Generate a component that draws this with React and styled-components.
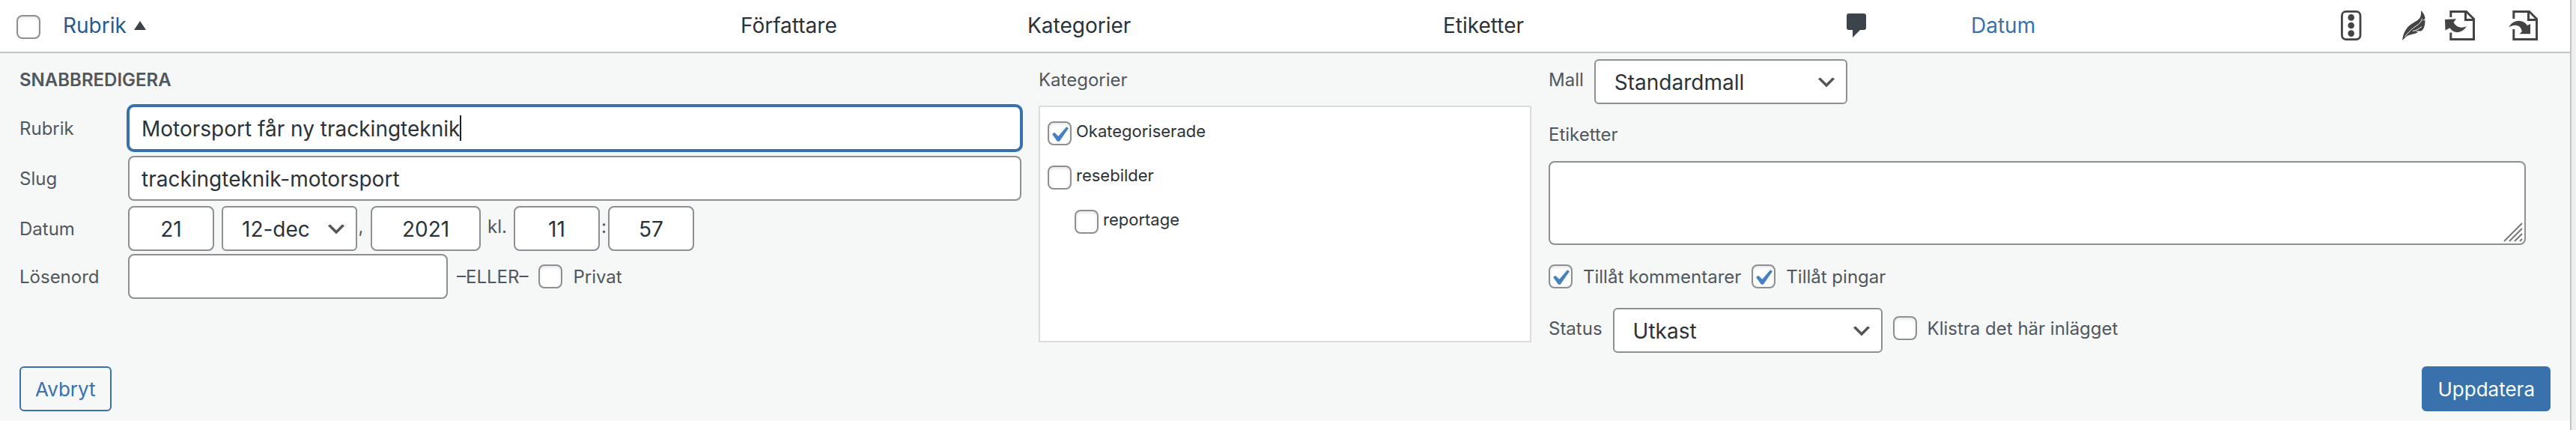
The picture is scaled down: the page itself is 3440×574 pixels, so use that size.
import React, { useLayoutEffect, useRef, useState } from 'react';
import styled, { createGlobalStyle, css } from 'styled-components';

const arrowDown =
  "url(\"data:image/svg+xml,%3Csvg xmlns='http://www.w3.org/2000/svg' viewBox='0 0 20 20'%3E%3Cpath d='M5 6l5 5 5-5 2 1-7 7-7-7 2-1z' fill='%23555'/%3E%3C/svg%3E\")";
const checkMark =
  "url(\"data:image/svg+xml,%3Csvg xmlns='http://www.w3.org/2000/svg' viewBox='0 0 20 20'%3E%3Cpath d='M14.83 4.89l1.34.94-5.81 8.38H9.02L5.78 9.67l1.34-1.25 2.57 2.4z' fill='%234682c2'/%3E%3C/svg%3E\")";

const CommentIcon = () => (
  <svg width="27" height="32" viewBox="0 0 27 32" fill="#3c434a" role="img" aria-label="Kommentarer">
    <path d="M3 0h20a3 3 0 0 1 3 3v16a3 3 0 0 1-3 3h-5l-10 10V22H3a3 3 0 0 1-3-3V3a3 3 0 0 1 3-3z" />
  </svg>
);

const ScoreIcon = () => (
  <svg width="28" height="40" viewBox="0 0 28 40" fill="#444" role="img" aria-label="SEO-poäng">
    <rect x="1.4" y="1.4" width="24.6" height="37.2" rx="5.5" fill="none" stroke="#444" strokeWidth="2.8" />
    <circle cx="13.7" cy="9.4" r="4.3" />
    <circle cx="13.7" cy="20" r="4.3" />
    <circle cx="13.7" cy="30.6" r="4.3" />
  </svg>
);

const FeatherIcon = () => (
  <svg width="31" height="40" viewBox="0 0 31 40" role="img" aria-label="Läsbarhet">
    <path
      d="M25 0c4 4 6 8.500 5.300 11.600l-3.600 1.700 3.700-.4c.2 7.100-1.400 11.100-4.400 14.100-3 .9-5.500.3-8.500.5l3.500 1.500c-5 3-10.500 2.500-15 5.500-2.500 1.700-4 3.500-6 5.500.5-6 2.500-12 7-17.500 4.500-5 13-8 16.500-12.500 1.500-3 1.800-6 1.500-10z"
      fill="#444"
    />
    <path d="M26.500 11c-2 7-7 8.500-12 12.500-4 3-7 6.500-11 11.500M14 27.500c4-.5 8.500-3 12-6" fill="none" stroke="#fff" strokeWidth="1" />
  </svg>
);

const LinksOutIcon = () => (
  <svg width="41" height="40" viewBox="0 0 41 40" fill="#444" role="img" aria-label="Utgående länkar">
    <path d="M7.800 9V1.500h20.800l9.900 9.800v27.200H7.800V29.500" fill="none" stroke="#444" strokeWidth="3" />
    <path d="M26 1h3v10h10v3H26z" />
    <path d="M0 12l15-.8-3.500 4.800c4 6.500 10 8.500 17.500 5-3.500 5.500-8 8.200-13.500 8-3.500-.3-6.500-2.200-9-5.800L.5 26.500z" />
  </svg>
);

const LinksInIcon = () => (
  <svg width="41" height="40" viewBox="0 0 41 40" fill="#444" role="img" aria-label="Inkommande länkar">
    <path d="M6.800 11V1.500h20.800l9.900 9.800v27.200H6.800V25" fill="none" stroke="#444" strokeWidth="3" />
    <path d="M25 1h3v10h10v3H25z" />
    <path d="M0 22.500C7 11 19 11.500 25 20l4-2v13.300H14.500l3.300-3.100C16.500 19.500 9 17.500 0 22.500z" />
  </svg>
);

const TitleField = () => {
  const inputRef = useRef(null);
  const [title, setTitle] = useState('Motorsport får ny trackingteknik');
  const [caretLeft, setCaretLeft] = useState(0);

  useLayoutEffect(() => {
    const style = getComputedStyle(inputRef.current);
    const ctx = document.createElement('canvas').getContext('2d');
    ctx.font = `${style.fontWeight} ${style.fontSize} ${style.fontFamily}`;
    setCaretLeft(Math.round(ctx.measureText(title).width) + parseInt(style.paddingLeft, 10) + 2);
  }, [title]);

  return (
    <InputWrapper>
      <TextInput
        id="post-title"
        ref={inputRef}
        type="text"
        value={title}
        onChange={(e) => setTitle(e.target.value)}
        $active
        autoFocus
      />
      <Caret style={{ left: caretLeft }} />
    </InputWrapper>
  );
};

const CategoryItem = ({ name, checked, nested }) => (
  <CategoryRow $nested={nested}>
    <Checkbox type="checkbox" defaultChecked={checked} />
    <span>{name}</span>
  </CategoryRow>
);

const QuickEdit = () => (
  <EditForm onSubmit={(e) => e.preventDefault()}>
    <Columns>
      <Column>
        <Heading>SNABBREDIGERA</Heading>
        <Field>
          <FieldLabel htmlFor="post-title">Rubrik</FieldLabel>
          <TitleField />
        </Field>
        <Field>
          <FieldLabel htmlFor="post-slug">Slug</FieldLabel>
          <TextInput id="post-slug" type="text" defaultValue="trackingteknik-motorsport" />
        </Field>
        <Field $tight>
          <FieldLabel htmlFor="post-day">Datum</FieldLabel>
          <DateInput id="post-day" type="text" defaultValue="21" />
          <MonthSelect aria-label="Månad" defaultValue="12">
            <option value="12">12-dec</option>
          </MonthSelect>
          <Separator $width="10px" $gap="8px">,</Separator>
          <DateInput $width="147px" type="text" aria-label="År" defaultValue="2021" />
          <Separator $width="44px">kl.</Separator>
          <DateInput type="text" aria-label="Timme" defaultValue="11" />
          <Separator $width="11px">:</Separator>
          <DateInput type="text" aria-label="Minut" defaultValue="57" />
        </Field>
        <Field>
          <FieldLabel htmlFor="post-password">Lösenord</FieldLabel>
          <PasswordInput id="post-password" type="text" />
          <OrText>–ELLER–</OrText>
          <CheckLabel>
            <Checkbox type="checkbox" />
            <span>Privat</span>
          </CheckLabel>
        </Field>
      </Column>

      <Column>
        <ColumnTitle id="category-title">Kategorier</ColumnTitle>
        <CategoryList role="group" aria-labelledby="category-title">
          <CategoryItem name="Okategoriserade" checked />
          <CategoryItem name="resebilder" />
          <CategoryItem name="reportage" nested />
        </CategoryList>
      </Column>

      <Column>
        <SelectRow $first>
          <SelectLabel htmlFor="post-template">Mall</SelectLabel>
          <Select id="post-template" $width="338px">
            <option>Standardmall</option>
          </Select>
        </SelectRow>
        <TagsLabel htmlFor="post-tags">Etiketter</TagsLabel>
        <TagsWrapper>
          <TagsInput id="post-tags" />
          <Grip width="26" height="26" viewBox="0 0 26 26" aria-hidden="true">
            <path d="M1 25L25 1M8 25L25 8M15 25L25 15M22 25L25 22" stroke="#777" strokeWidth="2" />
          </Grip>
        </TagsWrapper>
        <CheckRow>
          <CheckLabel>
            <Checkbox type="checkbox" defaultChecked />
            <span>Tillåt kommentarer</span>
          </CheckLabel>
          <CheckLabel>
            <Checkbox type="checkbox" defaultChecked />
            <span>Tillåt pingar</span>
          </CheckLabel>
        </CheckRow>
        <SelectRow>
          <SelectLabel htmlFor="post-status">Status</SelectLabel>
          <Select id="post-status" $width="360px">
            <option>Utkast</option>
          </Select>
          <StickyLabel>
            <Checkbox type="checkbox" />
            <span>Klistra det här inlägget</span>
          </StickyLabel>
        </SelectRow>
      </Column>
    </Columns>
    <Actions>
      <Button type="button">Avbryt</Button>
      <Button type="submit" $primary>
        Uppdatera
      </Button>
    </Actions>
  </EditForm>
);

const App = () => (
  <>
    <GlobalStyle />
    <Page>
      <PostTable>
        <thead>
          <tr>
            <CheckCell $width="69px">
              <Checkbox type="checkbox" aria-label="Välj alla" />
            </CheckCell>
            <HeadCell>
              <SortLink href="#rubrik" $current>
                Rubrik
                <svg width="16" height="12" viewBox="0 0 16 12" fill="#3c434a" aria-hidden="true">
                  <path d="M8 0l8 12H0z" />
                </svg>
              </SortLink>
            </HeadCell>
            <HeadCell $width="383px">Författare</HeadCell>
            <HeadCell $width="555px">Kategorier</HeadCell>
            <HeadCell $width="539px">Etiketter</HeadCell>
            <HeadCell $width="166px">
              <CommentIcon />
            </HeadCell>
            <HeadCell $width="494px">
              <SortLink href="#datum">Datum</SortLink>
            </HeadCell>
            <HeadCell $width="82px">
              <ScoreIcon />
            </HeadCell>
            <HeadCell $width="57px">
              <FeatherIcon />
            </HeadCell>
            <HeadCell $width="85px">
              <LinksOutIcon />
            </HeadCell>
            <HeadCell $width="97px">
              <LinksInIcon />
            </HeadCell>
          </tr>
        </thead>
        <tbody>
          <tr>
            <EditCell colSpan={11}>
              <QuickEdit />
            </EditCell>
          </tr>
        </tbody>
      </PostTable>
    </Page>
  </>
);

const GlobalStyle = createGlobalStyle`
  *, *::before, *::after {
    box-sizing: border-box;
  }

  body {
    margin: 0;
    background: #f0f0f1;
    color: #2c3338;
    font: 400 24px Inter, "Liberation Sans", sans-serif;
  }
`;

const Page = styled.main`
  min-height: 100vh;
  margin-right: 6px;
  border-right: 2px solid #c3c4c7;
  background: #fff;
`;

const PostTable = styled.table`
  width: 100%;
  table-layout: fixed;
  border-collapse: separate;
  border-spacing: 0;
`;

const HeadCell = styled.th`
  width: ${({ $width }) => $width || 'auto'};
  height: 71px;
  padding: 0 0 2px 15px;
  border-bottom: 2px solid #c3c4c7;
  vertical-align: middle;
  text-align: left;
  font-size: 28px;
  font-weight: 400;
  line-height: 40px;

  svg {
    display: block;
  }
`;

const CheckCell = styled(HeadCell)`
  padding: 20px 0 0 22px;
  vertical-align: top;
`;

const SortLink = styled.a`
  display: inline-flex;
  align-items: center;
  gap: 10px;
  color: ${({ $current }) => ($current ? '#265a90' : '#3971ad')};
  text-decoration: none;
`;

const EditCell = styled.td`
  padding: 0;
  background: #f6f7f7;
`;

const EditForm = styled.form`
  padding: 0 26px 13px;
`;

const Columns = styled.div`
  display: grid;
  grid-template-columns: minmax(0, 61fr) minmax(0, 30fr) minmax(0, 61fr);
  column-gap: 23px;
  color: #50575e;
`;

const Column = styled.div`
  display: flex;
  flex-direction: column;
`;

const Heading = styled.h4`
  margin: 0;
  padding-top: 2px;
  font-size: 24px;
  font-weight: 600;
  line-height: 68px;
`;

const ColumnTitle = styled.span`
  padding-top: 2px;
  line-height: 68px;
`;

const Field = styled.div`
  display: flex;
  align-items: center;
  margin-bottom: ${({ $tight }) => ($tight ? '4px' : '7px')};
`;

const FieldLabel = styled.label`
  flex: 0 0 145px;
`;

const control = css`
  height: 60px;
  margin: 0;
  border: 2px solid #8c8f94;
  border-radius: 8px;
  background-color: #fff;
  color: #2c3338;
  font-family: inherit;
  font-size: 28px;
  outline: none;
`;

const TextInput = styled.input`
  ${control}
  flex: 1;
  width: 100%;
  min-width: 0;
  padding: 2px 16px 0;
  ${({ $active }) =>
    $active &&
    css`
      border-color: #3971ad;
      box-shadow: 0 0 0 2px #3971ad;
      caret-color: transparent;
    `}
`;

const InputWrapper = styled.div`
  position: relative;
  display: flex;
  flex: 1;
`;

const Caret = styled.span`
  position: absolute;
  top: 13px;
  width: 2px;
  height: 34px;
  background: #1d2327;
  pointer-events: none;
`;

const DateInput = styled.input`
  ${control}
  width: ${({ $width }) => $width || '115px'};
  padding: 2px 0 0;
  text-align: center;
`;

const PasswordInput = styled.input`
  ${control}
  width: 427px;
  padding: 2px 16px 0;
`;

const Select = styled.select`
  ${control}
  appearance: none;
  width: ${({ $width }) => $width};
  padding: 2px 48px 0 25px;
  border-radius: 6px;
  background: #fff ${arrowDown} no-repeat right 10px top 55%;
  background-size: 32px 32px;
`;

const MonthSelect = styled(Select)`
  width: 181px;
  margin-left: 10px;
`;

const Separator = styled.span`
  width: ${({ $width }) => $width};
  margin-right: ${({ $gap }) => $gap || '0'};
  line-height: 56px;
  align-self: flex-start;
  text-align: center;
`;

const OrText = styled.span`
  margin: 0 14px 0 12px;
`;

const Checkbox = styled.input`
  appearance: none;
  display: block;
  flex: none;
  width: 32px;
  height: 32px;
  margin: 0;
  border: 2px solid #8c8f94;
  border-radius: 8px;
  background-color: #fff;
  box-shadow: inset 0 2px 4px rgba(0, 0, 0, 0.1);

  &:checked {
    background-image: ${checkMark};
    background-position: -8px -5px;
    background-size: 42px 42px;
    background-repeat: no-repeat;
  }
`;

const CheckLabel = styled.label`
  display: flex;
  align-items: center;
  gap: 14px;
`;

const StickyLabel = styled(CheckLabel)`
  height: 54px;
  margin-left: 14px;
`;

const CategoryList = styled.div`
  height: 316px;
  padding: 19px 10px;
  border: 2px solid #dcdcde;
  background: #fff;
  overflow: auto;
`;

const CategoryRow = styled.label`
  display: flex;
  gap: 6px;
  margin: 0 0 27px ${({ $nested }) => ($nested ? '36px' : '0')};
  color: #2c3338;
  font-size: 22px;
  line-height: 26px;
`;

const SelectRow = styled.div`
  display: flex;
  align-items: flex-start;
  margin-top: ${({ $first }) => ($first ? '8px' : '26px')};
`;

const SelectLabel = styled.label`
  margin-right: 14px;
  line-height: 56px;
`;

const TagsLabel = styled.label`
  margin-top: 6px;
  line-height: 70px;
`;

const TagsWrapper = styled.div`
  position: relative;
  display: flex;
  margin-right: 33px;
`;

const TagsInput = styled.textarea`
  ${control}
  width: 100%;
  height: 112px;
  padding: 4px 16px;
  resize: none;
`;

const Grip = styled.svg`
  position: absolute;
  right: 4px;
  bottom: 4px;
  pointer-events: none;
`;

const CheckRow = styled.div`
  display: flex;
  gap: 14px;
  margin-top: 26px;
`;

const Actions = styled.div`
  display: flex;
  justify-content: space-between;
  margin-top: 18px;
`;

const Button = styled.button`
  height: 60px;
  padding: 0 19px;
  border: 2px solid #3971ad;
  border-radius: 6px;
  background: ${({ $primary }) => ($primary ? '#3971ad' : '#f6f7f7')};
  color: ${({ $primary }) => ($primary ? '#fff' : '#3971ad')};
  font-family: inherit;
  font-size: 26px;
`;

export default App;
